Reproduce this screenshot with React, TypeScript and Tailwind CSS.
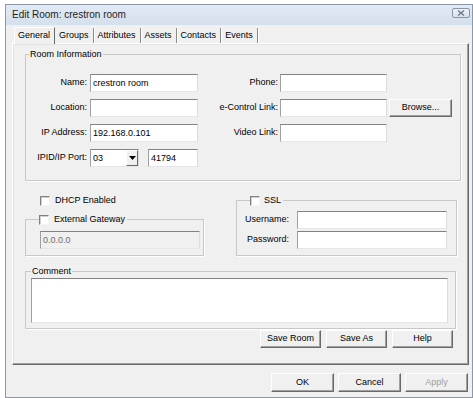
import React from 'react'

function TextBox({ value = '', className = '', disabled = false }: { value?: string; className?: string; disabled?: boolean }) {
  return (
    <div
      className={`h-[18px] shrink-0 flex items-center pl-[2px] leading-none border border-t-[#828282] border-l-[#a0a0a0] border-r-[#dcdcdc] border-b-[#e6e6e6] ${
        disabled ? 'bg-[#f0f0f0] text-[#6d6d6d]' : 'bg-white text-black'
      } ${className}`}
    >
      {value}
    </div>
  )
}

function Btn({ label, className = '', disabled = false }: { label: string; className?: string; disabled?: boolean }) {
  return (
    <div
      className={`flex items-center justify-center bg-[#f0f0f0] border border-t-white border-l-white border-r-[#696969] border-b-[#696969] shadow-[inset_-1px_-1px_0_#a0a0a0] ${
        disabled ? 'text-[#a0a0a0]' : 'text-black'
      } ${className}`}
    >
      {label}
    </div>
  )
}

function Check() {
  return (
    <span className="block w-[10px] h-[10px] shrink-0 bg-white border border-t-[#808080] border-l-[#808080] border-r-[#f4f4f4] border-b-[#f4f4f4] shadow-[inset_1px_1px_0_#cfcfcf]" />
  )
}

function Label({ text, className = '' }: { text: string; className?: string }) {
  return <span className={`shrink-0 text-right whitespace-nowrap ${className}`}>{text}</span>
}

const tabs = ['Groups', 'Attributes', 'Assets', 'Contacts', 'Events']

export default function App() {
  return (
    <div className="w-[473px] h-[398px] overflow-hidden bg-white text-[9px] text-black font-['Liberation_Sans',Arial,sans-serif]">
      <div className="ml-[5px] mt-[4px] w-[468px] h-[394px] border border-[#8a98a9] bg-[#f0f0f0] flex flex-col">
        {/* title bar */}
        <div className="h-[20px] shrink-0 flex items-start justify-between pl-[6px] pr-[2px] bg-linear-to-b from-[#e1e9f4] to-[#d5e0ed]">
          <span className="text-[10px] leading-[20px] text-[#1e1e1e]">Edit Room: crestron room</span>
          <div className="mt-[3px] w-[18px] h-[10px] rounded-[2px] border border-[#8796a8] bg-linear-to-b from-[#eef2f7] to-[#d9e1ea] flex items-center justify-center">
            <svg width="8" height="6" viewBox="0 0 8 6">
              <path d="M1 0.5 L7 5.5 M7 0.5 L1 5.5" stroke="#6b7b8d" strokeWidth="1.4" />
            </svg>
          </div>
        </div>

        {/* tab strip */}
        <div className="h-[18px] shrink-0 flex items-end pl-[8px]">
          <div className="relative z-10 mb-[-1px] h-[17px] flex items-center pl-[3px] pr-[4px] bg-[#f0f0f0] border-t border-l border-r border-t-white border-l-white border-r-[#696969]">
            General
          </div>
          {tabs.map(t => (
            <div key={t} className="h-[15px] flex items-center pt-[1px] px-[4px] border-r border-r-[#8a8a8a] shadow-[1px_0_0_#fff]">
              {t}
            </div>
          ))}
        </div>

        {/* tab page */}
        <div className="ml-[6px] w-[457px] h-[322px] shrink-0 border border-t-white border-l-white border-r-[#696969] border-b-[#696969] shadow-[inset_-1px_-1px_0_#a0a0a0,inset_1px_1px_0_#e3e3e3] flex flex-col">
          {/* Room Information */}
          <fieldset className="ml-[12px] mt-[5px] w-[436px] border border-[#c8c8c8] shadow-[1px_1px_0_#fff] pt-[14px] pb-[13px]">
            <legend className="ml-[3px] px-[1px] leading-[11px]">Room Information</legend>
            <div className="flex flex-col gap-[7px]">
              <div className="flex items-center h-[18px]">
                <Label text="Name:" className="w-[64px] pr-[3px]" />
                <TextBox value="crestron room" className="w-[108px]" />
                <Label text="Phone:" className="w-[82px] pr-[2px]" />
                <TextBox className="w-[107px]" />
              </div>
              <div className="flex items-center h-[18px]">
                <Label text="Location:" className="w-[64px] pr-[3px]" />
                <TextBox className="w-[108px]" />
                <Label text="e-Control Link:" className="w-[82px] pr-[2px]" />
                <TextBox className="w-[107px]" />
                <Btn label="Browse..." className="ml-[2px] w-[63px] h-[18px]" />
              </div>
              <div className="flex items-center h-[18px]">
                <Label text="IP Address:" className="w-[64px] pr-[3px]" />
                <TextBox value="192.168.0.101" className="w-[108px]" />
                <Label text="Video Link:" className="w-[82px] pr-[2px]" />
                <TextBox className="w-[107px]" />
              </div>
              <div className="flex items-center h-[18px]">
                <Label text="IPID/IP Port:" className="w-[64px] pr-[3px]" />
                <div className="w-[49px] h-[18px] flex items-center justify-between bg-white border border-t-[#828282] border-l-[#a0a0a0] border-r-[#dcdcdc] border-b-[#e6e6e6]">
                  <span className="pl-[2px] leading-none">03</span>
                  <div className="w-[12px] h-[16px] flex items-center justify-center bg-[#f0f0f0] border border-t-white border-l-white border-r-[#696969] border-b-[#696969]">
                    <svg width="7" height="4" viewBox="0 0 7 4">
                      <path d="M0 0 H7 L3.5 4 Z" fill="#000" />
                    </svg>
                  </div>
                </div>
                <TextBox value="41794" className="ml-[9px] w-[50px]" />
              </div>
            </div>
          </fieldset>

          {/* DHCP / Gateway / SSL */}
          <div className="ml-[12px] mt-[14px] flex items-start">
            <div className="w-[179px] flex flex-col">
              <div className="h-[11px] flex items-center pl-[15px] gap-[5px]">
                <Check />
                <span className="leading-none">DHCP Enabled</span>
              </div>
              <fieldset className="mt-[8px] w-[179px] border border-[#c8c8c8] shadow-[1px_1px_0_#fff] pt-[6px] pb-[6px]">
                <legend className="ml-[13px] pr-[2px]">
                  <span className="h-[11px] flex items-center gap-[5px]">
                    <Check />
                    <span className="leading-none">External Gateway</span>
                  </span>
                </legend>
                <TextBox value="0.0.0.0" disabled className="ml-[14px] w-[160px]" />
              </fieldset>
            </div>
            <fieldset className="ml-[32px] w-[221px] border border-[#c8c8c8] shadow-[1px_1px_0_#fff] pt-[5px] pb-[6px]">
              <legend className="ml-[13px] pr-[2px]">
                <span className="h-[11px] flex items-center gap-[4px]">
                  <Check />
                  <span className="leading-none">SSL</span>
                </span>
              </legend>
              <div className="flex flex-col gap-[2px] pl-[8px]">
                <div className="flex items-center h-[18px]">
                  <Label text="Username:" className="w-[44px]" />
                  <TextBox className="ml-[8px] w-[150px]" />
                </div>
                <div className="flex items-center h-[18px]">
                  <Label text="Password:" className="w-[44px]" />
                  <TextBox className="ml-[8px] w-[150px]" />
                </div>
              </div>
            </fieldset>
          </div>

          {/* Comment */}
          <fieldset className="ml-[12px] mt-[10px] w-[431px] border border-[#c8c8c8] shadow-[1px_1px_0_#fff] pt-[1px] pb-[5px]">
            <legend className="ml-[5px] px-[1px] leading-[11px]">Comment</legend>
            <div className="ml-[5px] w-[417px] h-[45px] bg-white border border-t-[#828282] border-l-[#a0a0a0] border-r-[#dcdcdc] border-b-[#e6e6e6]" />
          </fieldset>

          <div className="mt-[1px] pr-[15px] flex justify-end gap-[5px]">
            <Btn label="Save Room" className="w-[61px] h-[18px]" />
            <Btn label="Save As" className="w-[61px] h-[18px]" />
            <Btn label="Help" className="w-[61px] h-[18px]" />
          </div>
        </div>

        {/* dialog buttons */}
        <div className="mt-[8px] pr-[4px] flex justify-end gap-[4px]">
          <Btn label="OK" className="w-[63px] h-[19px]" />
          <Btn label="Cancel" className="w-[63px] h-[19px]" />
          <Btn label="Apply" disabled className="w-[63px] h-[19px]" />
        </div>
      </div>
    </div>
  )
}
